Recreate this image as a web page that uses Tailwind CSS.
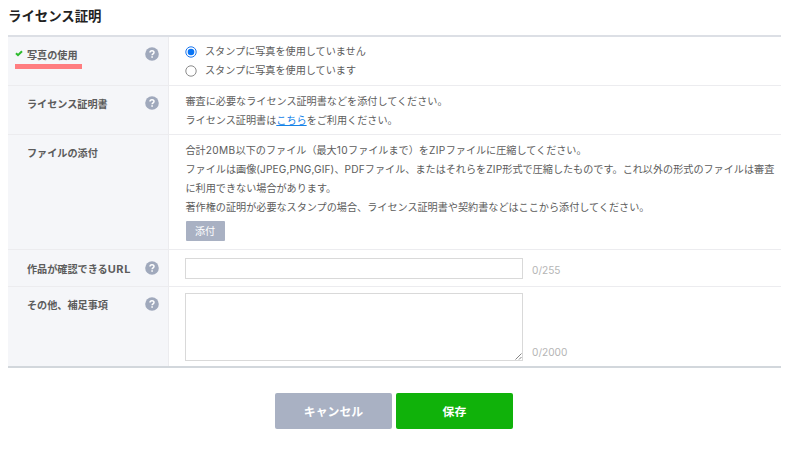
<!DOCTYPE html>
<html lang="ja">
<head>
  <meta charset="UTF-8">
  <title>ライセンス証明</title>
  <script src="https://cdn.jsdelivr.net/npm/@tailwindcss/browser@4"></script>
</head>
<body class="bg-white font-['Inter','Noto_Sans_CJK_JP',sans-serif] text-[10.12px] leading-[19px] text-[#5c5c5c] whitespace-nowrap">
  <svg class="hidden">
    <symbol id="help" viewBox="0 0 14 14">
      <circle cx="7" cy="7" r="6.8" fill="#a0a9bc"/>
      <path d="M5 5.6C5 3.1 9 3.1 9 5.4C9 6.8 7.1 6.8 7.1 8.3" fill="none" stroke="#fff" stroke-width="1.5"/>
      <path d="M6.3 9.3h1.6v1.5H6.3z" fill="#fff"/>
    </symbol>
  </svg>

  <main class="w-[773px] ml-2 pt-[6px]">
    <h1 class="h-[29px] text-[13.4px] leading-5 font-bold text-[#222]">ライセンス証明</h1>

    <section class="border-t-2 border-b-2 border-t-[#dcdfe5] border-b-[#d2d7dc]">
      <div class="flex h-12">
        <div class="w-[161px] shrink-0 flex items-start bg-[#f5f6f9] border-r border-[#ececef] pt-[10px] pl-[7px] pr-[9px]">
          <svg class="w-2 h-[7px] mt-[3px] mr-1" viewBox="0 0 8 7"><path d="M1 3.2L3 5.2L7 1.2" fill="none" stroke="#2dbb2d" stroke-width="2"/></svg>
          <div class="relative leading-4 font-bold">写真の使用
            <span class="absolute -left-3 top-[17px] w-[67px] h-[5px] bg-[#ff7d80]"></span>
          </div>
          <svg class="w-[14px] h-[14px] ml-auto"><use href="#help"/></svg>
        </div>
        <div class="pl-[16px] pt-[5px]">
          <label class="flex items-center h-[19px]">
            <svg class="w-3 h-3 mr-2" viewBox="0 0 12 12"><circle cx="6" cy="6" r="5.2" fill="#fff" stroke="#1a75ee"/><circle cx="6" cy="6" r="3.3" fill="#0874f5"/></svg>
            スタンプに写真を使用していません
          </label>
          <label class="flex items-center h-[19px]">
            <svg class="w-3 h-3 mr-2" viewBox="0 0 12 12"><circle cx="6" cy="6" r="5.2" fill="#fff" stroke="#8b8b8b"/></svg>
            スタンプに写真を使用しています
          </label>
        </div>
      </div>

      <div class="flex h-[49px] border-t border-[#ececef]">
        <div class="w-[161px] shrink-0 flex items-start bg-[#f5f6f9] border-r border-[#ececef] pt-[10px] pl-[19px] pr-[9px]">
          <span class="leading-4 font-bold">ライセンス証明書</span>
          <svg class="w-[14px] h-[14px] ml-auto"><use href="#help"/></svg>
        </div>
        <p class="pl-[16.5px] pt-[6px]">審査に必要なライセンス証明書などを添付してください。<br>ライセンス証明書は<a href="#" class="text-[#1683e8] underline">こちら</a>をご利用ください。</p>
      </div>

      <div class="flex h-[115px] border-t border-[#ececef]">
        <div class="w-[161px] shrink-0 bg-[#f5f6f9] border-r border-[#ececef] pt-[10px] pl-[19px]">
          <span class="block leading-4 font-bold">ファイルの添付</span>
        </div>
        <div class="pl-[16.5px] pt-[6px]">
          <p>合計<span class="tracking-[.4px]">20MB</span>以下のファイル（最大<span class="tracking-[.4px]">10</span>ファイルまで）を<span class="tracking-[.4px]">ZIP</span>ファイルに圧縮してください。<br>ファイルは画像<span class="tracking-[.12px]">(JPEG,PNG,GIF)</span>、<span class="tracking-[.2px]">PDF</span>ファイル、またはそれらを<span class="tracking-[.2px]">ZIP</span>形式で圧縮したものです。これ以外の形式のファイルは審査<br>に利用できない場合があります。<br>著作権の証明が必要なスタンプの場合、ライセンス証明書や契約書などはここから添付してください。</p>
          <button class="block w-[39px] h-5 mt-1 rounded-[1px] bg-[#a9b1c3] text-white">添付</button>
        </div>
      </div>

      <div class="flex h-[37px] border-t border-[#ececef]">
        <div class="w-[161px] shrink-0 flex items-start bg-[#f5f6f9] border-r border-[#ececef] pt-[11px] pl-[19px] pr-[9px]">
          <span class="leading-4 font-bold">作品が確認できる<span class="text-[11px] tracking-[.6px]">URL</span></span>
          <svg class="w-[14px] h-[14px] ml-auto"><use href="#help"/></svg>
        </div>
        <div class="flex pl-[16px] pt-2">
          <input type="text" class="w-[338px] h-[21px] border border-[#d9d9d9]">
          <span class="ml-[9px] pt-[3px] text-[#b5b5b5]">0/255</span>
        </div>
      </div>

      <div class="flex h-[80px] border-t border-[#ececef]">
        <div class="w-[161px] shrink-0 flex items-start bg-[#f5f6f9] border-r border-[#ececef] pt-[10px] pl-[19px] pr-[9px]">
          <span class="leading-4 font-bold">その他、補足事項</span>
          <svg class="w-[14px] h-[14px] ml-auto"><use href="#help"/></svg>
        </div>
        <div class="flex items-start pl-[16px] pt-[6px]">
          <div class="relative">
            <textarea class="block w-[338px] h-[68px] resize-none border border-[#d9d9d9]"></textarea>
            <svg class="absolute right-[1px] bottom-[1px] w-[7px] h-[7px]" viewBox="0 0 7 7"><path d="M.5 6.5L6.5 .5M4 6.5L6.5 4" stroke="#777" stroke-width=".9"/></svg>
          </div>
          <span class="ml-[9px] mt-[50px] text-[#b5b5b5]">0/2000</span>
        </div>
      </div>
    </section>

    <div class="flex gap-1 mt-[25px] ml-[267px]">
      <button class="w-[117px] h-9 rounded-xs bg-[#a9b1c3] text-[11.9px] font-bold text-white">キャンセル</button>
      <button class="w-[117px] h-9 rounded-xs bg-[#10b20a] text-[11.9px] font-bold text-white">保存</button>
    </div>
  </main>
</body>
</html>
